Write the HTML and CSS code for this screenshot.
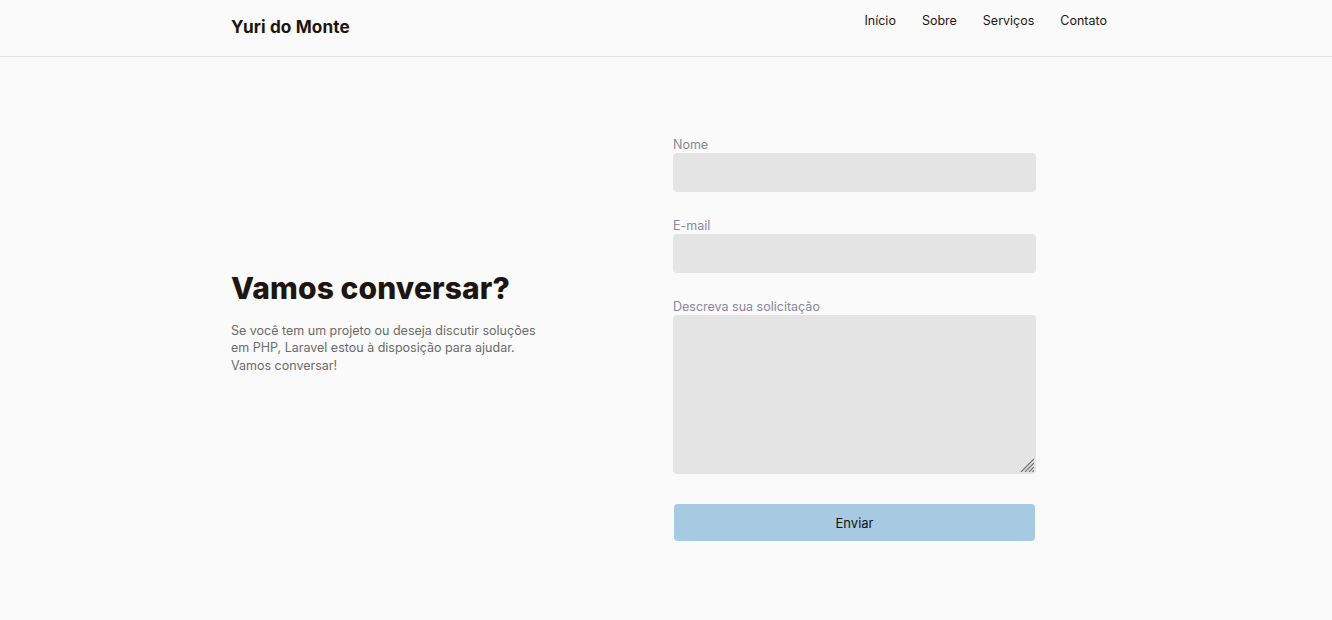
FILE: index.html
```html
<!DOCTYPE html>
<html lang="pt-BR">
<head>
<meta charset="utf-8">
<title>Yuri do Monte</title>
<link rel="stylesheet" href="styles.css">
</head>
<body>
<header class="header">
  <div class="container header-inner">
    <a class="logo" href="#">Yuri do Monte</a>
    <nav class="nav">
      <a href="#">Início</a>
      <a href="#">Sobre</a>
      <a href="#">Serviços</a>
      <a href="#">Contato</a>
    </nav>
  </div>
</header>
<main class="main">
  <div class="container contact">
    <div class="intro">
      <h1 class="title">Vamos conversar?</h1>
      <p class="text">Se você tem um projeto ou deseja discutir soluções em PHP, Laravel estou à disposição para ajudar. Vamos conversar!</p>
    </div>
    <form class="form">
      <label class="field">
        <span class="label">Nome</span>
        <input class="input" type="text">
      </label>
      <label class="field">
        <span class="label">E-mail</span>
        <input class="input" type="email">
      </label>
      <label class="field">
        <span class="label">Descreva sua solicitação</span>
        <span class="textarea-wrap">
          <textarea class="input textarea"></textarea>
          <svg class="grip" width="14" height="14" viewBox="0 0 14 14" aria-hidden="true">
            <path d="M1 14L14 1M5 14L14 5M9 14L14 9M12.5 14L14 12.5" stroke="#6b6b6b" stroke-width="1.1" fill="none"/>
          </svg>
        </span>
      </label>
      <button class="button" type="button">Enviar</button>
    </form>
  </div>
</main>
</body>
</html>
```
FILE: styles.css
```css
* { box-sizing: border-box; }
html, body { margin: 0; padding: 0; }
body {
  background: #fafafa;
  font-family: "Inter", "Roboto", "Liberation Sans", sans-serif;
  color: #1f1510;
}
.container {
  width: 882px;
  margin: 0 auto;
  padding-left: 6px;
}
.header {
  height: 57px;
  border-bottom: 1px solid #e3e3e3;
}
.header-inner {
  display: flex;
  justify-content: space-between;
  align-items: flex-start;
}
.logo {
  margin-top: 16px;
  font-size: 17.2px;
  font-weight: 700;
  color: #1f1510;
  text-decoration: none;
  letter-spacing: 0.1px;
}
.nav {
  display: flex;
  gap: 26px;
  margin-top: 13px;
}
.nav a {
  font-size: 12.5px;
  color: #1f1510;
  text-decoration: none;
}
.main {
  padding: 80px 0 60px;
}
.contact {
  display: grid;
  grid-template-columns: 442px 1fr;
  align-items: center;
}
.intro {
  margin-bottom: 34px;
}
.title {
  margin: 0 0 16px;
  font-size: 30px;
  font-weight: 800;
  letter-spacing: 0.1px;
  color: #1f1510;
}
.text {
  margin: 0;
  width: 310px;
  font-size: 12.5px;
  line-height: 17.4px;
  color: #6a6a6a;
}
.form {
  width: 363px;
  display: flex;
  flex-direction: column;
}
.field {
  display: flex;
  flex-direction: column;
  margin-bottom: 26px;
}
.label {
  font-size: 12.5px;
  line-height: 15px;
  margin-bottom: 1px;
  color: #86889a;
}
.input {
  display: block;
  width: 100%;
  height: 39px;
  border: none;
  border-radius: 4px;
  background: #e4e4e4;
  font: inherit;
  outline: none;
}
.textarea-wrap {
  position: relative;
  display: block;
}
.textarea {
  height: 159px;
  resize: none;
}
.grip {
  position: absolute;
  right: 2px;
  bottom: 2px;
  pointer-events: none;
}
.button {
  margin: 4px 1px 0;
  height: 37px;
  border: none;
  border-radius: 4px;
  background: #a7cae3;
  color: #111;
  font-family: inherit;
  font-size: 13px;
}
```
